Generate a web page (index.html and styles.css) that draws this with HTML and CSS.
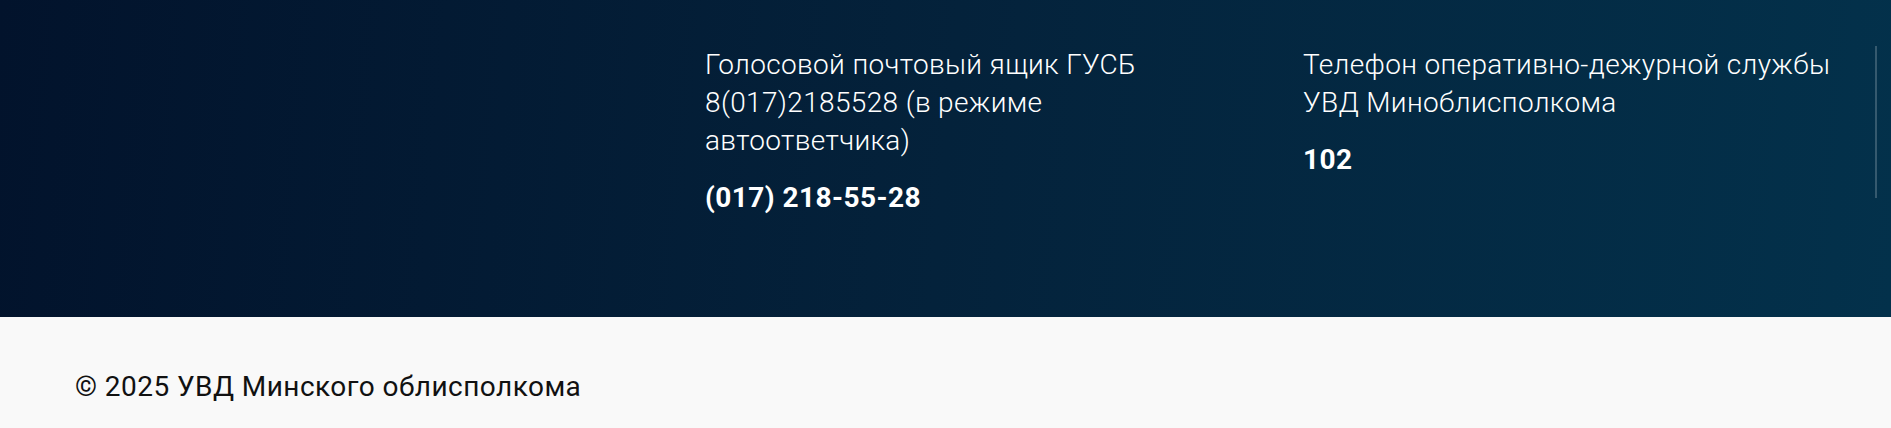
FILE: index.html
```html
<!DOCTYPE html>
<html lang="ru">
<head>
   <meta charset="UTF-8">
   <meta name="viewport" content="width=device-width, initial-scale=1.0">
   <title>Контакты</title>
   <link rel="stylesheet" href="styles.css">
</head>
<body>
   <section class="contacts">
      <div class="contacts-grid">
         <div class="contact"></div>
         <div class="contact">
            <p class="contact-title">Голосовой почтовый ящик ГУСБ 8(017)2185528 (в режиме автоответчика)</p>
            <p class="contact-phone">(017) 218-55-28</p>
         </div>
         <div class="contact contact-last">
            <p class="contact-title">Телефон оперативно-дежурной службы УВД Миноблисполкома</p>
            <p class="contact-phone">102</p>
         </div>
      </div>
   </section>
   <footer class="copyright">
      <p>© 2025 УВД Минского облисполкома</p>
   </footer>
</body>
</html>
```

FILE: styles.css
```css
body {
   font-family: Roboto, "Liberation Sans", Arial, sans-serif;
   margin: 0;
   background-color: #f9f9f9;
}

.contacts {
   background: linear-gradient(95deg, #02132c 0%, #04223b 50%, #03314b 100%);
   height: 317px;
   box-sizing: border-box;
   padding: 46px 14px 0 75px;
   color: #ffffff;
}

.contacts-grid {
   display: grid;
   grid-template-columns: 630px 598px 1fr;
   align-items: start;
}

.contact {
   padding-right: 80px;
}

.contact p {
   margin: 0 0 19px;
   font-size: 28px;
   line-height: 38px;
}

.contact-title {
   font-weight: 300;
   letter-spacing: 0.35px;
}

.contact-phone {
   font-weight: 700;
   letter-spacing: 0.45px;
}

.contact-last {
   padding-right: 20px;
   border-right: 2px solid rgba(255, 255, 255, 0.2);
}

.copyright {
   padding: 52px 75px 40px;
}

.copyright p {
   margin: 0;
   font-size: 28px;
   line-height: 36px;
   letter-spacing: 0.45px;
   color: #111111;
}
```
